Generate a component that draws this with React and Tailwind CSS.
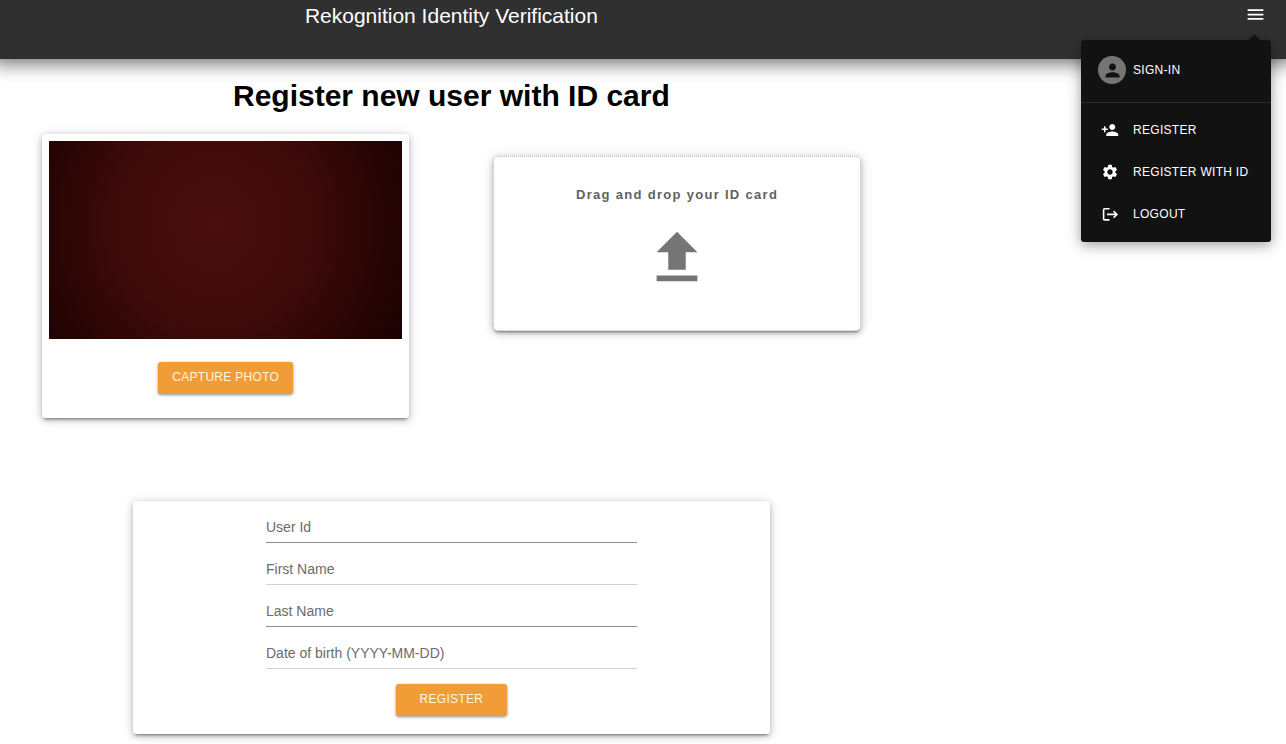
import { useState } from "react";
import {
  MdMenu,
  MdPerson,
  MdPersonAdd,
  MdSettings,
  MdFileUpload,
} from "react-icons/md";

const LogoutIcon = ({ className }) => (
  <svg
    viewBox="0 0 18 18"
    fill="none"
    stroke="currentColor"
    strokeWidth="1.6"
    className={className}
    aria-hidden="true"
  >
    <path d="M8.5 3.8H3.6a1 1 0 0 0-1 1v9.1a1 1 0 0 0 1 1h4.9" />
    <path d="M6 9.4h9.8M12.6 6.1l3.3 3.3-3.3 3.3" />
  </svg>
);

const menuItems = [
  { label: "REGISTER", icon: MdPersonAdd },
  { label: "REGISTER WITH ID", icon: MdSettings },
  { label: "LOGOUT", icon: LogoutIcon },
];

const fields = [
  { id: "userId", label: "User Id", line: "border-[#8c8c8c]" },
  { id: "firstName", label: "First Name", line: "border-[#d2d2d2]" },
  { id: "lastName", label: "Last Name", line: "border-[#8c8c8c]" },
  { id: "dob", label: "Date of birth (YYYY-MM-DD)", line: "border-[#d2d2d2]" },
];

const cardShadow =
  "shadow-[0_3px_3px_-2px_rgba(0,0,0,0.4),0_2px_6px_rgba(0,0,0,0.25),0_1px_14px_rgba(0,0,0,0.1)]";

const Button = ({ children, className, ...props }) => (
  <button
    className={`h-8 rounded-[3px] bg-[#f09d38] pb-0.5 text-[12px] tracking-wide text-[#fff6dc] shadow-[0_1px_3px_rgba(0,0,0,0.45)] ${className}`}
    {...props}
  >
    {children}
  </button>
);

const AccountMenu = () => (
  <nav className="absolute top-10 right-[15px] z-10 w-[190px] rounded-[3px] bg-[#121212] text-[12px] tracking-wide text-white shadow-[0_3px_14px_rgba(0,0,0,0.4)]">
    {/* little arrow that points at the menu button */}
    <span className="absolute -top-1 right-3 size-[9px] rotate-45 bg-[#121212]" />
    <a
      href="#signin"
      className="flex h-[63px] items-center gap-[7px] border-b border-[#2c2c2c] pb-0.5 pl-[17px]"
    >
      <span className="flex size-7 items-center justify-center rounded-full bg-[#757575]">
        <MdPerson className="size-[21px] text-[#121212]" />
      </span>
      SIGN-IN
    </a>
    <ul className="pt-1.5 pb-[7px]">
      {menuItems.map(({ label, icon: Icon }) => (
        <li key={label}>
          <a
            href="#menu"
            className="flex h-[42px] items-center gap-[14px] pl-5"
          >
            <Icon className="size-[18px]" />
            {label}
          </a>
        </li>
      ))}
    </ul>
  </nav>
);

const Header = () => {
  const [open, setOpen] = useState(true);

  return (
    <header className="relative flex h-[59px] items-start bg-[#303030] text-white shadow-[0_-4px_18px_8px_rgba(0,0,0,0.6)]">
      <p className="w-[70.2%] pt-0.5 text-center text-[21px] leading-7">
        Rekognition Identity Verification
      </p>
      <button
        aria-label="Account menu"
        aria-expanded={open}
        onClick={() => setOpen(!open)}
        className="mt-1 mr-5 ml-auto"
      >
        <MdMenu className="size-[21px]" />
      </button>
      {open && <AccountMenu />}
    </header>
  );
};

const App = () => {
  return (
    <div className="min-h-screen bg-white font-['Liberation_Sans',Arial,sans-serif]">
      <Header />
      <main className="w-[70.2%] pt-[17px] pb-2">
        <h1 className="text-center text-[30px] leading-10 font-bold text-black">
          Register new user with ID card
        </h1>

        <div className="mt-[18px] grid grid-cols-2 items-start gap-x-[84px] px-[42px]">
          <section
            className={`rounded-[3px] bg-white p-[7px] pb-6 text-center ${cardShadow}`}
          >
            {/* camera preview */}
            <div className="aspect-[353/198] bg-[radial-gradient(ellipse_65%_125%_at_47%_42%,#490e0e_0%,#400b0b_40%,#270404_75%,#160101_100%)]" />
            <Button className="mt-[23px] px-[14px]">CAPTURE PHOTO</Button>
          </section>

          <label
            className={`mt-[22px] flex h-[175px] cursor-pointer flex-col items-center rounded-[5px] border border-dotted border-[#b8b8b8] bg-white pt-7 text-[#757575] ${cardShadow}`}
          >
            <span className="text-[13px] leading-5 font-bold tracking-widest text-[#616161]">
              Drag and drop your ID card
            </span>
            <MdFileUpload className="mt-[18px] size-[70px]" />
            <input type="file" accept="image/*" className="sr-only" />
          </label>
        </div>

        <form
          onSubmit={(e) => e.preventDefault()}
          className={`mx-[133px] mt-[83px] rounded-[3px] bg-white px-[133px] pb-[18px] text-center ${cardShadow}`}
        >
          {fields.map(({ id, label, line }) => (
            <div key={id} className="relative pt-3">
              <input
                id={id}
                name={id}
                placeholder=" "
                className={`peer block h-[30px] w-full border-b text-[14px] outline-none ${line}`}
              />
              {/* label sits in the empty field and goes away once it is filled */}
              <label
                htmlFor={id}
                className="absolute bottom-1.5 left-0 text-[14px] leading-5 text-[#6b6b6b] peer-[:not(:placeholder-shown)]:hidden"
              >
                {label}
              </label>
            </div>
          ))}
          <Button type="submit" className="mt-[15px] px-6">
            REGISTER
          </Button>
        </form>
      </main>
    </div>
  );
};

export default App;
